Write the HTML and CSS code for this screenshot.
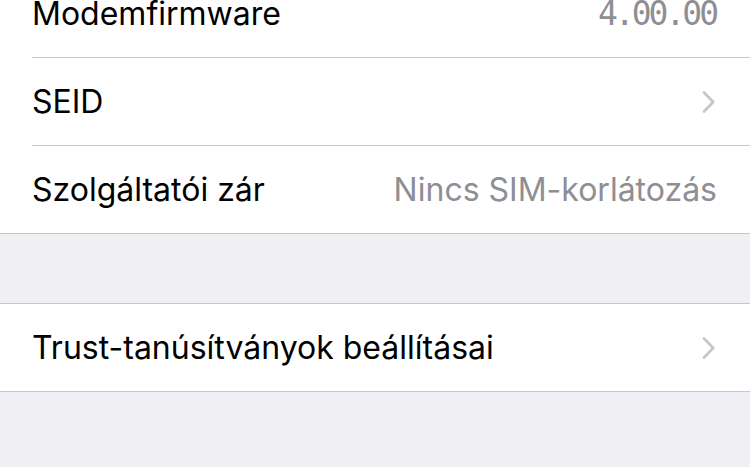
FILE: index.html
```html
<!DOCTYPE html>
<html>
<head>
<meta charset="utf-8">
<link rel="stylesheet" href="styles.css">
</head>
<body>
<div class="page">
  <div class="group first">
    <div class="row">
      <div class="cell"><span class="label">Modemfirmware</span><span class="value mono">4.00.00</span></div>
    </div>
    <div class="row">
      <div class="cell"><span class="label">SEID</span><span class="chev"><svg width="14" height="24" viewBox="0 0 14 24"><path d="M2 2.5 L11.2 12 L2 21.5" fill="none" stroke="#c7c7cc" stroke-width="2.8" stroke-linecap="round" stroke-linejoin="round"/></svg></span></div>
    </div>
    <div class="row last">
      <div class="cell"><span class="label">Szolgáltatói zár</span><span class="value">Nincs SIM-korlátozás</span></div>
    </div>
  </div>
  <div class="gap"></div>
  <div class="group">
    <div class="row last">
      <div class="cell"><span class="label">Trust-tanúsítványok beállításai</span><span class="chev"><svg width="14" height="24" viewBox="0 0 14 24"><path d="M2 2.5 L11.2 12 L2 21.5" fill="none" stroke="#c7c7cc" stroke-width="2.8" stroke-linecap="round" stroke-linejoin="round"/></svg></span></div>
    </div>
  </div>
</div>
</body>
</html>
```
FILE: styles.css
```css
html, body {
  margin: 0;
  padding: 0;
  background: #efeff4;
  width: 750px;
  height: 467px;
  overflow: hidden;
}
.page {
  font-family: "Inter", "Liberation Sans", sans-serif;
  color: #000;
}
.group {
  background: #fff;
  border-top: 1px solid #c8c7cc;
  border-bottom: 1px solid #c8c7cc;
}
.group.first {
  margin-top: -30px;
  border-top: none;
}
.row {
  padding-left: 32px;
}
.cell {
  height: 87px;
  display: flex;
  align-items: center;
  justify-content: space-between;
  padding-right: 33px;
  border-bottom: 1px solid #c8c7cc;
}
.row.last .cell {
  border-bottom: none;
}
.label {
  font-size: 32px;
}
.value {
  font-size: 32px;
  color: #8e8e93;
}
.mono {
  font-family: "DejaVu Sans Mono", monospace;
  font-size: 33px;
  letter-spacing: -3px;
  margin-right: 1px;
}
.chev {
  display: flex;
  align-items: center;
  margin-right: 1px;
}
.gap {
  height: 69px;
}
```
